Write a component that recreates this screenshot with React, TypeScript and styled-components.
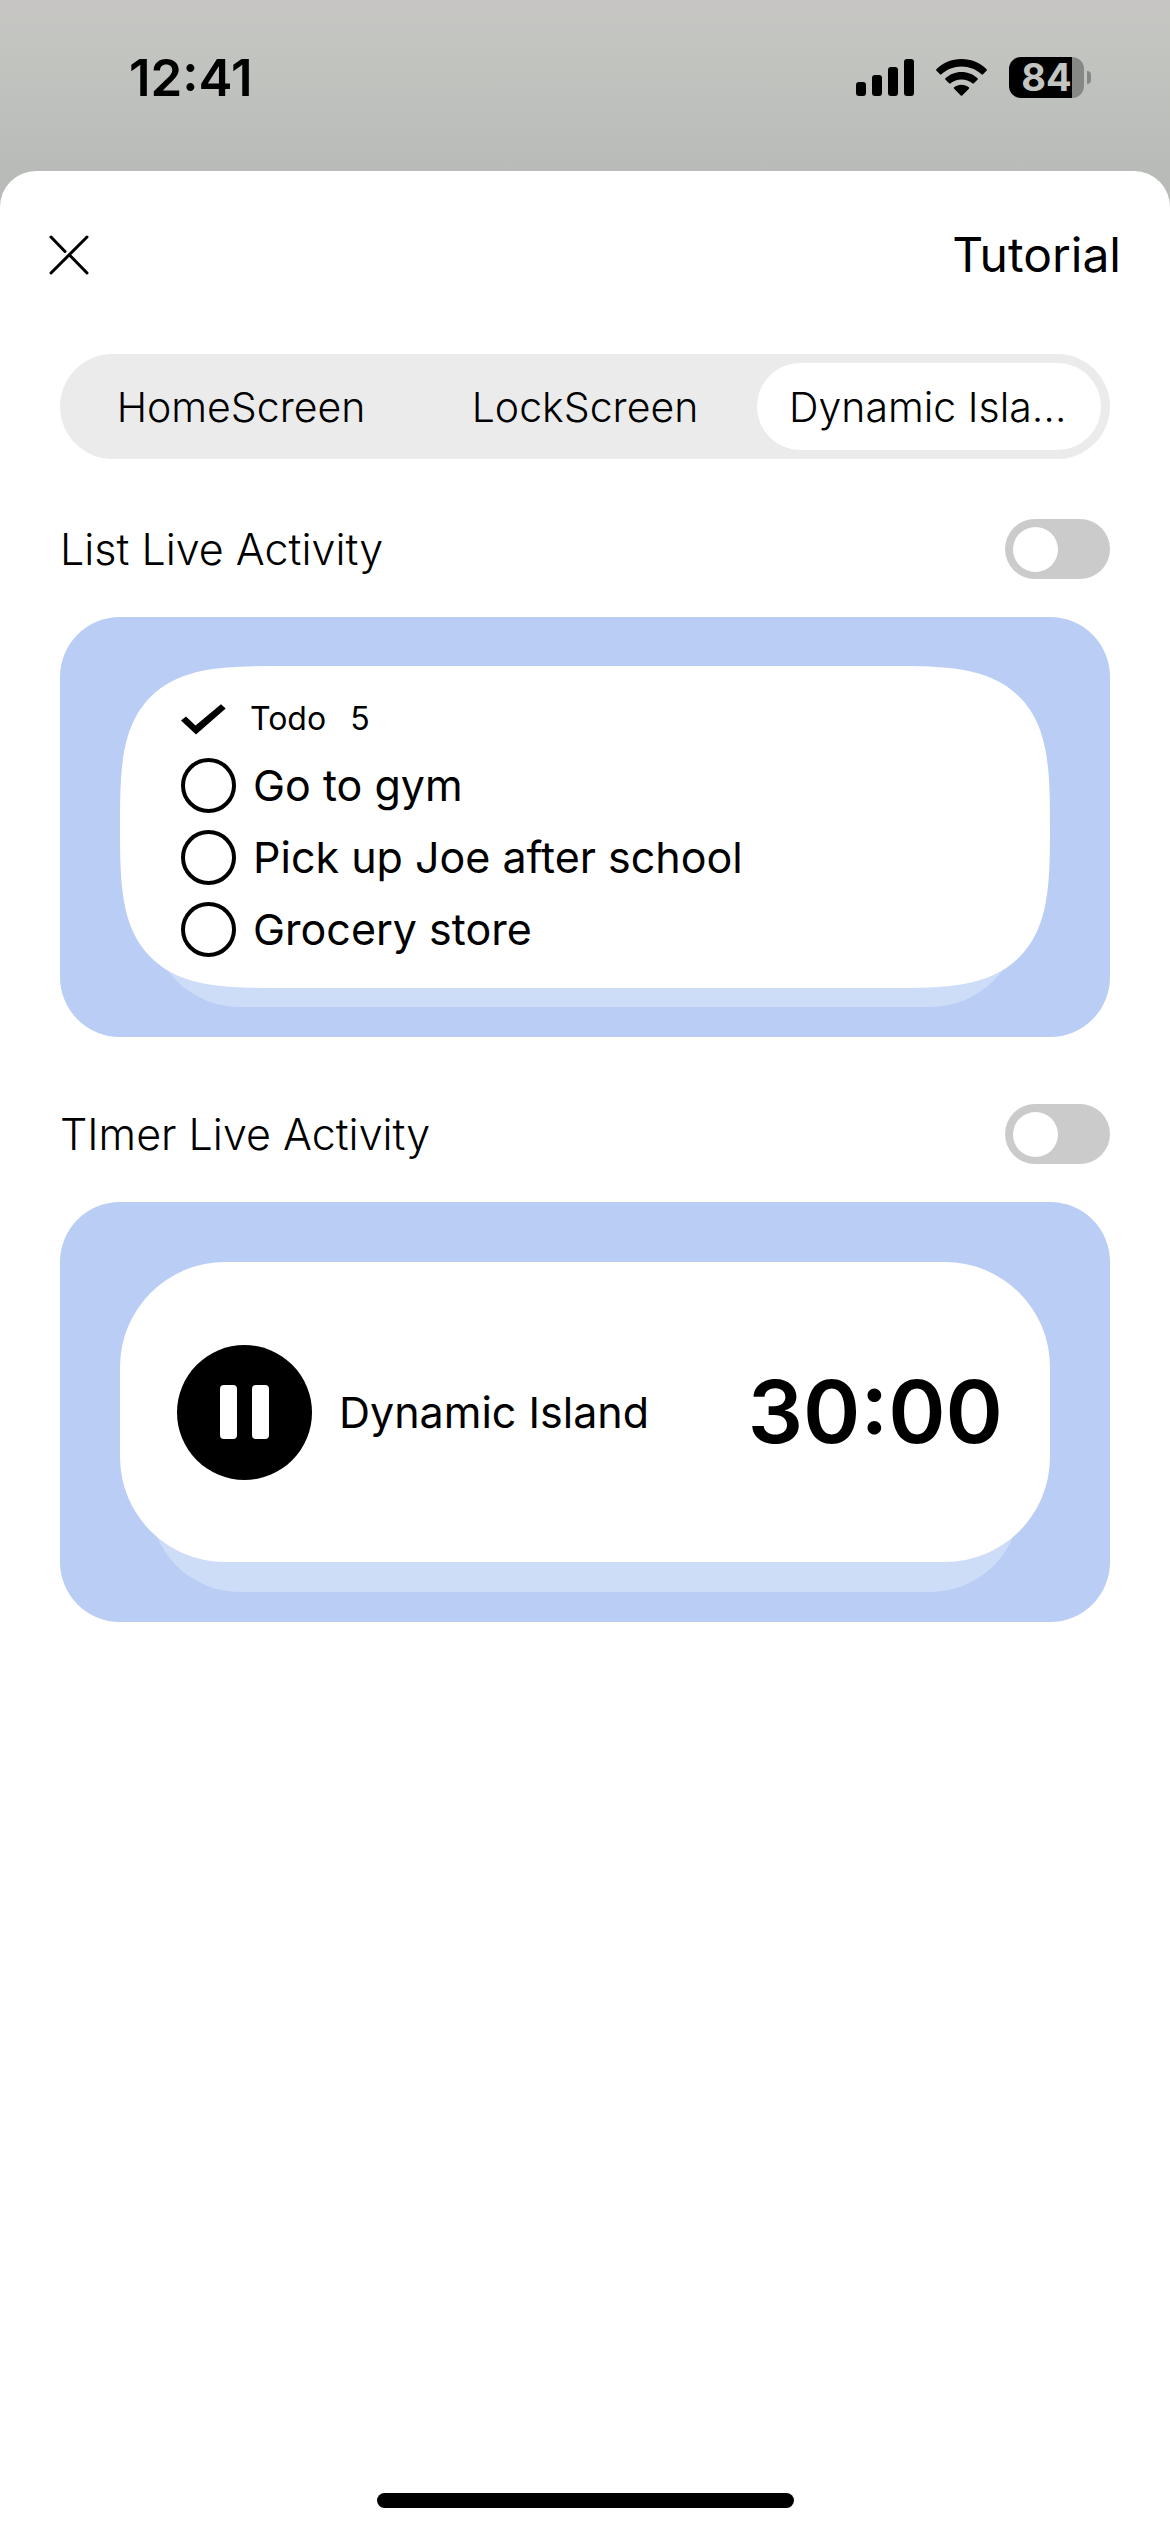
import React, { useState } from "react";
import styled, { createGlobalStyle } from "styled-components";

const GlobalStyle = createGlobalStyle`
  *, *::before, *::after { box-sizing: border-box; }
  body {
    margin: 0;
    background: #ffffff;
    color: #000000;
    font-family: Inter, "Liberation Sans", sans-serif;
  }
  button { font: inherit; color: inherit; }
`;

const Screen = styled.div`
  display: flex;
  flex-direction: column;
  min-height: 100vh;
  background: linear-gradient(#c7c5c3 0, #c3c5c1 40px, #b9bbb8 171px, #b9bbb8 100%);
`;

const StatusBar = styled.header`
  display: flex;
  align-items: flex-start;
  justify-content: space-between;
  height: 171px;
  padding: 48px 79px 0 129px;
`;

const Clock = styled.time`
  font-size: 51px;
  line-height: 60px;
  font-weight: 600;
`;

const StatusIcons = styled.div`
  display: flex;
  align-items: center;
  gap: 22px;
  padding-top: 9px;
`;

const Battery = styled.div`
  display: flex;
  align-items: center;
  gap: 3px;
`;

const BatteryBody = styled.div`
  display: flex;
  align-items: center;
  justify-content: center;
  width: 75px;
  height: 41px;
  border-radius: 12px;
  background: linear-gradient(90deg, #000000 84%, #868885 84%);
  color: #c3c5c1;
  font-size: 38px;
  line-height: 41px;
  font-weight: 700;
`;

const BatteryTip = styled.div`
  width: 4px;
  height: 13px;
  border-radius: 0 6px 6px 0;
  background: #868885;
`;

const Sheet = styled.main`
  display: flex;
  flex: 1;
  flex-direction: column;
  border-radius: 36px 36px 0 0;
  background: #ffffff;
`;

const TitleBar = styled.div`
  display: flex;
  align-items: center;
  justify-content: space-between;
  padding: 54px 49px 0;
`;

const CloseButton = styled.button`
  display: flex;
  padding: 0;
  border: 0;
  background: none;
`;

const Title = styled.h1`
  margin: 0;
  font-size: 48px;
  line-height: 60px;
  font-weight: 400;
`;

const Content = styled.div`
  display: flex;
  flex-direction: column;
  padding: 69px 60px 0;
`;

const Tabs = styled.div`
  display: grid;
  grid-template-columns: repeat(3, minmax(0, 1fr));
  padding: 9px;
  border-radius: 53px;
  background: #ebebeb;
`;

const Tab = styled.button<{ $active: boolean }>`
  height: 87px;
  padding: 0 32px;
  border: 0;
  border-radius: 44px;
  background: ${(p) => (p.$active ? "#ffffff" : "transparent")};
  font-size: 41px;
  line-height: 52px;
  font-weight: 300;
  overflow: hidden;
  text-overflow: ellipsis;
  white-space: nowrap;
`;

const Section = styled.section`
  display: flex;
  flex-direction: column;
  gap: 38px;
  margin-top: 60px;

  & + & { margin-top: 67px; }
`;

const SettingRow = styled.div`
  display: flex;
  align-items: center;
  justify-content: space-between;
`;

const SettingLabel = styled.label`
  font-size: 43px;
  line-height: 60px;
  font-weight: 300;
`;

const Switch = styled.input`
  display: flex;
  align-items: center;
  appearance: none;
  width: 105px;
  height: 60px;
  margin: 0;
  padding: 0 8px;
  border-radius: 30px;
  background: #cbcbcb;

  &::before {
    content: "";
    width: 45px;
    height: 45px;
    border-radius: 50%;
    background: #ffffff;
  }

  &:checked { justify-content: flex-end; background: #b9cdf5; }
`;

const Preview = styled.div`
  display: flex;
  flex-direction: column;
  justify-content: center;
  height: 420px;
  padding: 0 60px;
  border-radius: 60px;
  background: #b9cdf5;
`;

const Stack = styled.div`
  position: relative;
  isolation: isolate;
`;

const BackCard = styled.div<{ $drop: number }>`
  position: absolute;
  z-index: -1;
  inset: auto 30px ${(p) => -p.$drop}px;
  height: 200px;
  border-radius: 90px;
  background: #cdddf8;
`;

const ListCard = styled.div`
  display: flex;
  flex-direction: column;
  gap: 17px;
  height: 322px;
  padding: 31px 61px;
  border-radius: 120px;
  background: #ffffff;

  @supports (corner-shape: superellipse(1.7)) {
    border-radius: 160px;
    corner-shape: superellipse(1.7);
  }
`;

const ListHeader = styled.div`
  display: flex;
  align-items: center;
  gap: 24px;
  height: 44px;
  font-size: 32px;
  line-height: 44px;
`;

const Items = styled.ul`
  display: flex;
  flex-direction: column;
  gap: 17px;
  margin: 0;
  padding: 0;
  list-style: none;
`;

const Item = styled.label`
  display: flex;
  align-items: center;
  gap: 17px;
  font-size: 43px;
  line-height: 55px;
`;

const Circle = styled.input`
  appearance: none;
  width: 55px;
  height: 55px;
  margin: 0;
  border: 4px solid #000000;
  border-radius: 50%;

  &:checked { background: #000000; }
`;

const TimerCard = styled.div`
  display: flex;
  align-items: center;
  height: 300px;
  padding: 0 47px 0 57px;
  border-radius: 105px;
  background: #ffffff;
`;

const PauseButton = styled.button`
  display: flex;
  align-items: center;
  justify-content: center;
  gap: 15px;
  width: 135px;
  height: 135px;
  padding: 0;
  border: 0;
  border-radius: 50%;
  background: #000000;
`;

const PauseBar = styled.span`
  width: 17px;
  height: 54px;
  border-radius: 4px;
  background: #ffffff;
`;

const TimerName = styled.span`
  flex: 1;
  padding-left: 27px;
  font-size: 43px;
  line-height: 60px;
`;

const TimerValue = styled.time`
  font-size: 87px;
  line-height: 106px;
  font-weight: 600;
`;

const HomeIndicator = styled.div`
  width: 417px;
  height: 15px;
  margin: auto auto 24px;
  border-radius: 8px;
  background: #000000;
`;

const SignalIcon = () => (
  <svg width="58" height="37" viewBox="0 0 58 37" aria-hidden="true">
    <rect x="0" y="23" width="10" height="14" rx="3" />
    <rect x="16" y="16" width="10" height="21" rx="3" />
    <rect x="32" y="8" width="10" height="29" rx="3" />
    <rect x="48" y="0" width="10" height="37" rx="3" />
  </svg>
);

const WifiIcon = () => (
  <svg width="51" height="37" viewBox="0 0 51 37" aria-hidden="true">
    <path d="M25.500 0C35.500 0 44.500 4 50.600 10.300Q51.200 11 50.500 11.700L47 15.300Q46.200 16 45.500 15.300C40 10.400 33 7.600 25.500 7.600S11 10.400 5.500 15.300Q4.800 16 4 15.300L.5 11.700Q-.2 11 .4 10.300C6.500 4 15.500 0 25.500 0Z" />
    <path d="M25.500 13C31.800 13 37.400 15.400 41.600 19.300Q42.200 20 41.500 20.700L37.900 24.300Q37.200 25 36.400 24.300C33.500 21.900 29.700 20.500 25.500 20.500S17.500 21.900 14.600 24.300Q13.800 25 13.100 24.300L9.500 20.700Q8.800 20 9.400 19.300C13.600 15.400 19.200 13 25.500 13Z" />
    <path d="M25.500 25.800C28.300 25.800 30.800 26.700 32.800 28.300Q33.600 29 32.900 29.700L26.200 36.500Q25.500 37.200 24.800 36.500L18.100 29.700Q17.400 29 18.200 28.300C20.200 26.700 22.700 25.800 25.500 25.800Z" />
  </svg>
);

const CloseIcon = () => (
  <svg width="40" height="40" viewBox="0 0 40 40" fill="none" stroke="#000000" strokeWidth="3" strokeLinecap="round" aria-hidden="true">
    <path d="M38 2L2 38M2 2L16 16.500M21 20.500L38 38" />
  </svg>
);

const CheckIcon = () => (
  <svg width="45" height="31" viewBox="0 0 45 31" aria-hidden="true">
    <path d="M0 16.500L5 12.500L14.500 21.500L40 .2L44.700 4.500L15 30.500Z" />
  </svg>
);

const tabs = ["HomeScreen", "LockScreen", "Dynamic Island"];
const todos = ["Go to gym", "Pick up Joe after school", "Grocery store"];

export default function App() {
  const [active, setActive] = useState(2);

  return (
    <>
      <GlobalStyle />
      <Screen>
        <StatusBar>
          <Clock>12:41</Clock>
          <StatusIcons>
            <SignalIcon />
            <WifiIcon />
            <Battery>
              <BatteryBody>84</BatteryBody>
              <BatteryTip />
            </Battery>
          </StatusIcons>
        </StatusBar>
        <Sheet>
          <TitleBar>
            <CloseButton aria-label="Close">
              <CloseIcon />
            </CloseButton>
            <Title>Tutorial</Title>
          </TitleBar>
          <Content>
            <Tabs role="tablist">
              {tabs.map((name, i) => (
                <Tab key={name} role="tab" aria-selected={i === active} $active={i === active} onClick={() => setActive(i)}>
                  {name}
                </Tab>
              ))}
            </Tabs>
            <Section>
              <SettingRow>
                <SettingLabel htmlFor="list-activity">List Live Activity</SettingLabel>
                <Switch id="list-activity" type="checkbox" role="switch" />
              </SettingRow>
              <Preview>
                <Stack>
                  <ListCard>
                    <ListHeader>
                      <CheckIcon />
                      <span>Todo</span>
                      <span>5</span>
                    </ListHeader>
                    <Items>
                      {todos.map((todo) => (
                        <li key={todo}>
                          <Item>
                            <Circle type="checkbox" />
                            {todo}
                          </Item>
                        </li>
                      ))}
                    </Items>
                  </ListCard>
                  <BackCard $drop={19} />
                </Stack>
              </Preview>
            </Section>
            <Section>
              <SettingRow>
                <SettingLabel htmlFor="timer-activity">TImer Live Activity</SettingLabel>
                <Switch id="timer-activity" type="checkbox" role="switch" />
              </SettingRow>
              <Preview>
                <Stack>
                  <TimerCard>
                    <PauseButton aria-label="Pause">
                      <PauseBar />
                      <PauseBar />
                    </PauseButton>
                    <TimerName>Dynamic Island</TimerName>
                    <TimerValue>30:00</TimerValue>
                  </TimerCard>
                  <BackCard $drop={30} />
                </Stack>
              </Preview>
            </Section>
          </Content>
          <HomeIndicator />
        </Sheet>
      </Screen>
    </>
  );
}
